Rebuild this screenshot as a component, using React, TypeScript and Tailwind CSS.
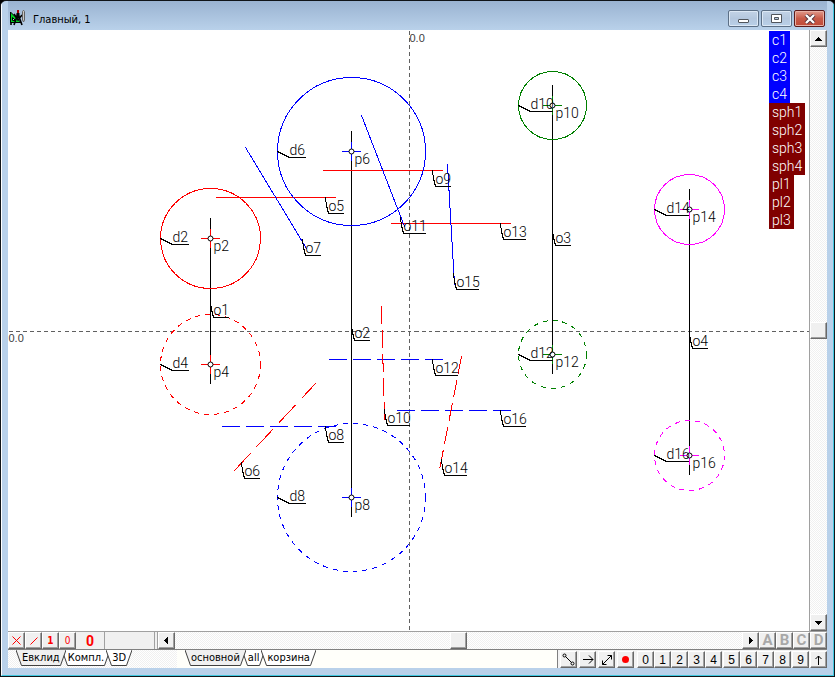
import { clsx } from "clsx";
import type { ReactNode } from "react";

const RED = "#ff0000";
const BLUE = "#0000ff";
const GREEN = "#008000";
const MAGENTA = "#ff00ff";

const bevel =
  "flex items-center justify-center bg-[#f0f0f0] border border-t-white border-l-white border-r-[#696969] border-b-[#696969] shadow-[inset_-1px_-1px_0_#a0a0a0]";
const dither =
  "bg-[repeating-conic-gradient(#ffffff_0_25%,#f0f0f0_0_50%)] bg-[length:2px_2px]";

// circles with a marked centre: d = circle label, p = centre label
const circles = [
  { d: "d2", p: "p2", x: 210, y: 238, r: 50, color: RED, dashed: false },
  { d: "d4", p: "p4", x: 210, y: 364, r: 50, color: RED, dashed: true },
  { d: "d6", p: "p6", x: 351, y: 151, r: 74, color: BLUE, dashed: false },
  { d: "d8", p: "p8", x: 351, y: 497, r: 74, color: BLUE, dashed: true },
  { d: "d10", p: "p10", x: 552, y: 105, r: 34, color: GREEN, dashed: false },
  { d: "d12", p: "p12", x: 552, y: 354, r: 34, color: GREEN, dashed: true },
  { d: "d14", p: "p14", x: 689, y: 209, r: 35, color: MAGENTA, dashed: false },
  { d: "d16", p: "p16", x: 689, y: 455, r: 35, color: MAGENTA, dashed: true },
];

// [x1, y1, x2, y2, color, dash]
const segments: [number, number, number, number, string, string?][] = [
  [210, 218, 210, 383, "#000"],
  [351, 131, 351, 516, "#000"],
  [552, 85, 552, 373, "#000"],
  [689, 189, 689, 474, "#000"],
  [216, 197, 335, 197, RED],
  [323, 170, 442, 170, RED],
  [391, 223, 510, 223, RED],
  [245, 147, 306, 248, BLUE],
  [361, 115, 404, 226, BLUE],
  [447, 164, 454, 284, BLUE],
  [222, 426, 335, 426, BLUE, "17 7"],
  [329, 359, 442, 359, BLUE, "17 7"],
  [397, 410, 510, 410, BLUE, "17 7"],
  [381, 306, 384, 419, RED, "17 7"],
  [461, 356, 439, 469, RED, "17 7"],
  [234, 470, 315, 383, RED, "23 10"],
];

const lineLabels = [
  { text: "o1", x: 210, y: 301 },
  { text: "o2", x: 351, y: 324 },
  { text: "o3", x: 552, y: 229 },
  { text: "o4", x: 689, y: 332 },
  { text: "o5", x: 325, y: 197 },
  { text: "o6", x: 241, y: 462 },
  { text: "o7", x: 302, y: 239 },
  { text: "o8", x: 325, y: 426 },
  { text: "o9", x: 432, y: 170 },
  { text: "o10", x: 384, y: 409 },
  { text: "o11", x: 400, y: 217 },
  { text: "o12", x: 432, y: 359 },
  { text: "o13", x: 500, y: 223 },
  { text: "o14", x: 441, y: 459 },
  { text: "o15", x: 453, y: 273 },
  { text: "o16", x: 500, y: 410 },
];

const objects = [
  { names: ["c1", "c2", "c3", "c4"], className: "bg-[#0000ff]" },
  { names: ["sph1", "sph2", "sph3", "sph4"], className: "bg-[#800000]" },
  { names: ["pl1", "pl2", "pl3"], className: "bg-[#800000]" },
];

const digitGroups = [["0", "1", "2", "3", "4"], ["5", "6", "7", "8"], ["9"]];

const Drawing = () => (
  <svg
    viewBox="8 30 801 601"
    className="block size-full font-['Roboto',sans-serif] text-[14px] font-light"
    shapeRendering="crispEdges"
    fill="none"
  >
    <g transform="translate(0.5 0.5)">
      <path d="M409 30V631M8 331H809" stroke="#606060" strokeDasharray="4 3" />
      {segments.map(([x1, y1, x2, y2, color, dash], i) => (
        <line key={i} x1={x1} y1={y1} x2={x2} y2={y2} stroke={color} strokeDasharray={dash} strokeLinecap="square" />
      ))}
      {circles.map(({ d, p, x, y, r, color, dashed }) => (
        <g key={d}>
          <circle cx={x} cy={y} r={r} stroke={color} strokeDasharray={dashed ? "5 5" : undefined} />
          <path d={`M${x - 9} ${y}h18M${x} ${y - 9}v18`} stroke={color} strokeLinecap="square" />
          <path d={`M${x - r} ${y}l12 6h${d.length > 2 ? 22 : 16}`} stroke="#000" />
          <circle cx={x} cy={y} r={2.5} fill="#fff" stroke="#000" shapeRendering="auto" />
          <text x={x - r + 12} y={y + 3} fill="#000">{d}</text>
          <text x={x + 3} y={y + 12} fill="#000">{p}</text>
        </g>
      ))}
      {lineLabels.map(({ text, x, y }) => (
        <g key={text}>
          <path d={`M${x} ${y}l1 8l2 8h${text.length > 2 ? 22 : 15}`} stroke="#000" />
          <text x={x + 3} y={y + 13} fill="#000">{text}</text>
        </g>
      ))}
      <text x={409} y={41} fill="#404040" className="font-['Liberation_Sans'] text-[11px]">0.0</text>
      <text x={8} y={341} fill="#404040" className="font-['Liberation_Sans'] text-[11px]">0.0</text>
    </g>
  </svg>
);

const Arrow = ({ d }: { d: string }) => (
  <svg width="7" height="7" viewBox="0 0 7 7" shapeRendering="crispEdges">
    <path d={d} fill="#000" />
  </svg>
);

const ToolButton = ({ label, className, children }: { label: string; className?: string; children: ReactNode }) => (
  <button aria-label={label} className={clsx(bevel, "h-[17px] w-[17px] shrink-0 leading-none", className)}>
    {children}
  </button>
);

const Tab = ({ active, children }: { active?: boolean; children: ReactNode }) => {
  const fill = active ? "#f0f0f0" : "#ffffff";
  return (
    <button role="tab" aria-selected={!!active} className={clsx("relative flex h-4 items-stretch", active ? "z-10" : "-ml-1")}>
      <svg width="6" height="16" viewBox="0 0 6 16">
        <path d="M0 0L6 15.5V0Z" fill={fill} />
        <path d="M0 0L5.5 15.5H6" stroke="#404040" fill="none" />
      </svg>
      <span className={clsx("border-b border-[#404040] leading-[15px]", active ? "bg-[#f0f0f0]" : "bg-white")}>
        {children}
      </span>
      <svg width="6" height="16" viewBox="0 0 6 16">
        <path d="M0 0V15.5L6 0Z" fill={fill} />
        <path d="M6 0L0.5 15.5H0" stroke="#404040" fill="none" />
      </svg>
    </button>
  );
};

const captionButton =
  "flex h-[17px] w-[31px] items-center justify-center rounded-[2px] border border-[#5c6f86] bg-linear-to-b from-[#c3d3e6] via-[#b4c7de] to-[#b9d0e9] shadow-[inset_0_0_0_1px_#dce8f5]";

const TitleBar = () => (
  <header className="flex h-[29px] shrink-0 items-center bg-linear-to-b from-[#9ab3d1] to-[#b9d1ea] pr-[2px]">
    <svg width="17" height="17" viewBox="0 0 17 17" className="mt-1 ml-px">
      <path d="M1.500 3L12 13.500H1.500Z" fill="#00d020" stroke="#000" />
      <path d="M3.500 8.500L6.500 11.500H3.500Z" fill="#b4cbe5" stroke="#000" />
      <path d="M2 13V16M9 4L5 16M9 5L13 16M5 5L9 11L13 6" stroke="#000" strokeWidth="1.6" fill="none" />
      <path d="M7.500 4H10.500V9H7.500Z" fill="#000" />
      <path d="M8 1H10V4H8Z" fill="#a00000" />
      <path d="M13.500 2.500Q14.500 0 15.500 2.500V11L14.500 13L13.500 11Z" fill="#c8c8c8" stroke="#606060" />
    </svg>
    <h1 className="ml-[7px] flex-1 pt-2 text-[11px] leading-4 text-black">Главный, 1</h1>
    <div className="flex gap-[2px] pt-[6px]">
      <button aria-label="Minimize" className={captionButton}>
        <span className="mt-1 h-1 w-[11px] rounded-[1px] border border-[#50555c] bg-white" />
      </button>
      <button aria-label="Restore" className={captionButton}>
        <svg width="11" height="9" viewBox="0 0 11 9">
          <path d="M.5 .5H10.500V8.500H.5Z" fill="#fff" stroke="#50555c" />
          <path d="M3.500 3.500H7.500V5.500H3.500Z" fill="#b4c7de" stroke="#50555c" />
        </svg>
      </button>
      <button
        aria-label="Close"
        className="flex h-[17px] w-[31px] items-center justify-center rounded-[2px] border border-[#5c1a1a] bg-linear-to-b from-[#e09a8c] via-[#c85a48] to-[#c04a38] shadow-[inset_0_0_0_1px_#e8b0a4]"
      >
        <svg width="12" height="10" viewBox="0 0 12 10">
          <path d="M2 1L10 9M10 1L2 9" stroke="#50303a" strokeWidth="4" />
          <path d="M2 1L10 9M10 1L2 9" stroke="#fff" strokeWidth="2.400" />
        </svg>
      </button>
    </div>
  </header>
);

const VerticalScrollbar = () => (
  <div className={clsx("flex w-[18px] shrink-0 flex-col border-l border-[#a0a0a0]", dither)}>
    <ToolButton label="Scroll up"><Arrow d="M3 2h1v1h1v1h1v1h1v1H0V5h1V4h1V3h1Z" /></ToolButton>
    <div className="flex flex-1 flex-col items-center justify-center">
      <div className={clsx(bevel, "h-[17px] w-full")} />
    </div>
    <ToolButton label="Scroll down"><Arrow d="M0 2h7v1H6v1H5v1H4v1H3V5H2V4H1V3H0Z" /></ToolButton>
  </div>
);

const ScrollRow = () => (
  <div className="flex h-[18px] shrink-0 border-t border-[#a0a0a0] bg-[#f0f0f0]">
    <ToolButton label="Delete">
      <svg width="9" height="9" viewBox="0 0 9 9"><path d="M.5 .5L8.500 8.500M8.500 .5L.5 8.500" stroke={RED} /></svg>
    </ToolButton>
    <ToolButton label="Line">
      <svg width="8" height="8" viewBox="0 0 8 8"><path d="M.5 7.500L7.500 .5" stroke={RED} /></svg>
    </ToolButton>
    <ToolButton label="One" className="text-[10px] font-bold text-[#ff0000]">1</ToolButton>
    <ToolButton label="Zero" className="text-[10px] text-[#ff0000]">0</ToolButton>
    <div className="flex w-[29px] items-center justify-center border-r border-[#a0a0a0] font-['Roboto'] text-[14px] leading-none font-bold text-[#ff0000]">
      0
    </div>
    <div className="mr-[2px] w-[50px] border-r border-[#a0a0a0]" />
    <div className={clsx("flex flex-1 border-l border-[#a0a0a0]", dither)}>
      <ToolButton label="Scroll left"><Arrow d="M5 0v7H4V6H3V5H2V4H1V3h1V2h1V1h1V0Z" /></ToolButton>
      <div className="flex flex-1 justify-center">
        <div className={clsx(bevel, "h-full w-[17px]")} />
      </div>
      <ToolButton label="Scroll right"><Arrow d="M2 0v7h1V6h1V5h1V4h1V3H5V2H4V1H3V0Z" /></ToolButton>
    </div>
    {["A", "B", "C", "D"].map((letter) => (
      <ToolButton key={letter} label={letter} className="font-['Roboto'] text-[15px] font-bold text-[#a8a8a8]">
        {letter}
      </ToolButton>
    ))}
  </div>
);

const TabRow = () => (
  <div className="flex h-[19px] shrink-0 border-t border-[#808080] bg-[#f3f3f3] text-[11px] text-black">
    <div role="tablist" className={clsx("flex w-[169px] pl-2", dither)}>
      <Tab active>Евклид</Tab>
      <Tab>Компл.</Tab>
      <Tab>3D</Tab>
    </div>
    <div role="tablist" className="flex flex-1 border-r border-[#808080] bg-[#fffffa] pl-2">
      <Tab active>основной</Tab>
      <Tab>all</Tab>
      <Tab>корзина</Tab>
    </div>
    <div className="flex gap-[2px] pt-px pl-[2px]">
      <ToolButton label="Segment">
        <svg width="13" height="13" viewBox="0 0 13 13" fill="none" stroke="#000">
          <path d="M3.500 3.500L9.500 9.500" />
          <circle cx="2.500" cy="2.500" r="1.500" />
          <circle cx="10.500" cy="10.500" r="1.500" />
        </svg>
      </ToolButton>
      <ToolButton label="Ray">
        <svg width="12" height="11" viewBox="0 0 12 11" fill="none" stroke="#000">
          <path d="M1 5.500H11M7 1.500L11 5.500L7 9.500" />
        </svg>
      </ToolButton>
      <ToolButton label="Line">
        <svg width="12" height="12" viewBox="0 0 12 12" fill="none" stroke="#000">
          <path d="M1.500 10.500L10.500 1.500M6.500 1.500H10.500V5.500M1.500 6.500V10.500H5.500" />
        </svg>
      </ToolButton>
      <ToolButton label="Point">
        <span className="size-[7px] rounded-full bg-[#ff0000]" />
      </ToolButton>
    </div>
    <div className="flex gap-px pt-px pl-[3px] font-['Liberation_Sans',sans-serif] text-[12px]">
      {digitGroups.map((group) => (
        <div key={group[0]} className="flex">
          {group.map((n) => (
            <ToolButton key={n} label={n}>{n}</ToolButton>
          ))}
        </div>
      ))}
      <ToolButton label="Up">
        <svg width="9" height="10" viewBox="0 0 9 10" fill="none" stroke="#000">
          <path d="M4.500 10V1M1.500 4L4.500 1L7.500 4" />
        </svg>
      </ToolButton>
    </div>
  </div>
);

export default function App() {
  return (
    <div className="h-screen bg-black font-['DejaVu_Sans_Condensed','DejaVu_Sans',sans-serif]">
      <div className="flex h-full flex-col overflow-hidden rounded-t-md border-t border-r border-b border-l border-[#101418]">
        <div className="flex min-h-0 flex-1 flex-col border-r border-b border-l border-r-[#40c8e0] border-b-[#40c8e0] border-l-white bg-[#b9d1ea] pr-[6px] pb-[7px] pl-[6px]">
          <TitleBar />
          <main className="flex min-h-0 flex-1 bg-white">
            <div className="relative min-w-0 flex-1">
              <Drawing />
              <ul className="absolute top-[1px] right-[6px] flex w-[34px] flex-col items-start font-['Roboto',sans-serif] text-[14px] leading-[18px] font-light text-white">
                {objects.map(({ names, className }) => (
                  <li key={names[0]} className={className}>
                    {names.map((name) => (
                      <div key={name} className="px-[3px]">{name}</div>
                    ))}
                  </li>
                ))}
              </ul>
            </div>
            <VerticalScrollbar />
          </main>
          <ScrollRow />
          <TabRow />
        </div>
      </div>
    </div>
  );
}
